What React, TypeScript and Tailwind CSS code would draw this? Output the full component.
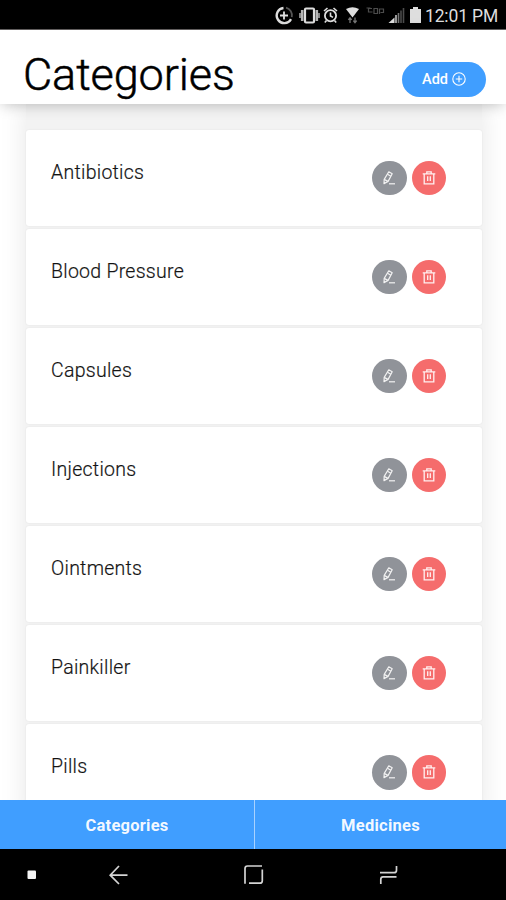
import { clsx } from 'clsx'

const categories = [
  'Antibiotics',
  'Blood Pressure',
  'Capsules',
  'Injections',
  'Ointments',
  'Painkiller',
  'Pills',
]

const tabs = ['Categories', 'Medicines']

export default function App() {
  return (
    <div className="w-[506px] h-[900px] flex flex-col overflow-hidden bg-white font-[Roboto,sans-serif] text-black">
      <StatusBar />

      {/* Header */}
      <header className="relative z-10 h-[74px] shrink-0 flex items-start justify-between bg-white pl-[23px] pr-5 shadow-[0_2px_14px_-2px_rgba(0,0,0,0.28)]">
        <h1 className="mt-[17px] text-[45px] leading-[56px] font-light tracking-[-0.1px] [-webkit-text-stroke:0.5px_black]">
          Categories
        </h1>
        <button className="mt-8 w-[84px] h-[35px] flex items-center justify-center gap-1 rounded-full bg-[#409eff] text-white text-[14.5px] font-medium">
          Add
          <PlusIcon />
        </button>
      </header>

      {/* Category list */}
      <main className="flex-1 min-h-0 overflow-hidden px-[26px]">
        <ul className="w-[456px] flex flex-col gap-[3px] pt-[25.5px] bg-[#f3f3f3] shadow-[0_0_26px_rgba(0,0,0,0.1)]">
          {categories.map((name) => (
            <CategoryCard key={name} name={name} />
          ))}
        </ul>
      </main>

      {/* Tabs */}
      <nav className="relative z-10 h-[49px] shrink-0 flex bg-[#409eff]">
        {tabs.map((tab, index) => (
          <button
            key={tab}
            className={clsx(
              'pt-[3px] text-[16.5px] font-bold tracking-[0.25px] text-white/95',
              index === 0 ? 'w-[255px] border-r border-[#a9d2ff]' : 'flex-1'
            )}
          >
            {tab}
          </button>
        ))}
      </nav>

      <SystemNav />
    </div>
  )
}

function CategoryCard({ name }: { name: string }) {
  return (
    <li className="h-[96.1px] shrink-0 flex items-start justify-between rounded-[3px] bg-white pl-[25px] pr-9 shadow-[0_0_2px_rgba(0,0,0,0.08)]">
      <span className="mt-[29px] text-[19.5px] leading-7 font-light tracking-[0.27px] text-[#111] [-webkit-text-stroke:0.2px_#222]">
        {name}
      </span>
      <div className="mt-[31px] flex gap-[5px]">
        <button className="w-[34.5px] h-[34.5px] flex items-center justify-center rounded-full bg-[#909399]">
          <EditIcon />
        </button>
        <button className="w-[34.5px] h-[34.5px] flex items-center justify-center rounded-full bg-[#f56c6c]">
          <TrashIcon />
        </button>
      </div>
    </li>
  )
}

function StatusBar() {
  return (
    <div className="h-[30px] shrink-0 flex items-center justify-end bg-black border-b border-[#686565] pr-[7px] text-[#dedede]">
      <svg width="150" height="29" viewBox="0 0 150 29" fill="none" stroke="currentColor">
        {/* Data saver */}
        <path d="M8.500 8a7.600 7.600 0 1 0 7.500 11.200" strokeWidth="2.4" />
        <path d="M11 7.600a8 8 0 0 1 5.800 9.500" strokeWidth="1.8" stroke="#555" />
        <path d="M9 11.500v8M5 15.500h8" strokeWidth="1.8" />
        {/* Vibrate */}
        <rect x="30" y="8.500" width="9" height="14" rx="1" strokeWidth="2.2" />
        <path d="M27.200 10v11M41.800 10v11" strokeWidth="2.600" stroke="#b5b5b5" />
        <path d="M25 13v5M44 13v5" strokeWidth="1.6" stroke="#a5a5a5" />
        {/* Alarm */}
        <circle cx="55.500" cy="15.700" r="5.600" strokeWidth="1.8" />
        <path d="M55.500 12.500v3.500l2.500 1.400M49 11l3.500-3M62 11l-3.500-3M51.500 20.500l-1.700 2M59.500 20.500l1.700 2" strokeWidth="1.6" />
        {/* Wifi */}
        <path d="M71 9Q77.500 5.500 84 9L77.500 17.500z" fill="currentColor" stroke="none" />
        <path d="M75 23v-5M73.300 19.800l1.700-2 1.700 2M80 17.500v5M78.300 20.700l1.700 2 1.700-2" stroke="#777" strokeWidth="1.3" />
        {/* Roaming */}
        <path d="M97 8.500h-3.500v3.500h4M99 8.500h3.500v5H99zM104.500 14V9h4v3.500h-3M91.500 8h4" stroke="#4c4c4c" strokeWidth="1.2" />
        {/* Signal */}
        <path d="M113.500 23l6-5.500V23z" fill="currentColor" stroke="none" />
        <path d="M121 23v-8" strokeWidth="1.8" stroke="#aaa" />
        <path d="M123.500 23V13" stroke="#777" strokeWidth="1.6" />
        <path d="M126 23V10.500M128.500 23V8" stroke="#4c4c4c" strokeWidth="1.6" />
        {/* Battery */}
        <path d="M135 9h3V7h5v2h3v14h-11z" fill="currentColor" stroke="none" />
      </svg>
      <span className="w-[74px] whitespace-nowrap text-[17.5px] leading-7 tracking-[-0.15px] pt-[3px]">12:01 PM</span>
    </div>
  )
}

function SystemNav() {
  return (
    <div className="h-[51px] shrink-0 bg-black">
      <svg width="506" height="51" viewBox="0 0 506 51" fill="none" stroke="#d4d4d4" strokeWidth="1.7">
        <rect x="27.500" y="21.500" width="8.500" height="8.500" rx="1" fill="#f5f5f5" stroke="none" />
        <path d="M127.500 26.200h-17M119 17l-8.800 9.200L119 35" />
        <path d="M245 34.700V19.500q0-2.500 2.500-2.500H262M262.300 20.500v11.200q0 2.500-2.500 2.500H249" />
        <path d="M396.500 17v4.200q0 2.500-2.500 2.500h-14M396.500 27.800H383q-2.200 0-2.200 2.500V35" />
      </svg>
    </div>
  )
}

function PlusIcon() {
  return (
    <svg className="w-[14px] h-[14px] mb-px" viewBox="0 0 14 14" fill="none" stroke="currentColor" strokeWidth="1.1">
      <circle cx="7" cy="7" r="6.200" />
      <path d="M7 3.800v6.400M3.800 7h6.400" />
    </svg>
  )
}

function EditIcon() {
  return (
    <svg className="w-4 h-4" viewBox="0 0 16 16" fill="none" stroke="#f2f2f2" strokeWidth="1.200" strokeLinejoin="round">
      <path d="M7.800 1.800l3.400 2-4.100 7.600-4.100 2.200.2-4.200z" />
      <path d="M6.500 4.200l3.400 2M3.200 9.400l3.700 2" />
      <path d="M8 13.800h6" />
    </svg>
  )
}

function TrashIcon() {
  return (
    <svg className="w-4 h-4" viewBox="0 0 16 16" fill="none" stroke="#fff0f0" strokeWidth="1.300">
      <path d="M1.700 3.800h12.600M3.200 4v9.800h9.600V4M5.800 3.600V1.800h4.400v1.800M6.700 6.300v4.800M9.300 6.300v4.800" />
    </svg>
  )
}
